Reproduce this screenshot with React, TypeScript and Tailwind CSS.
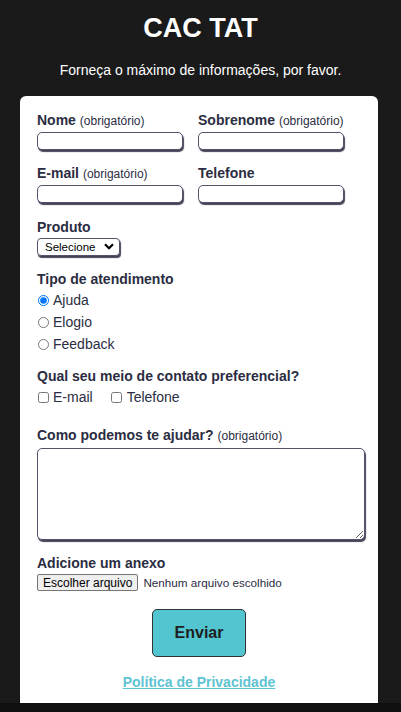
import React from 'react';

const labelCls = 'block h-[16px] text-[14px] leading-[16px] font-bold text-[#2b2d42] whitespace-nowrap';
const reqCls = 'text-[12px] leading-[12px] font-normal';
const inputCls =
    'block h-[18px] rounded-[5px] border border-[#55526b] bg-white shadow-[1px_2px_1px_rgba(35,32,55,0.85)] outline-none';

function Field({ label, required, className }: { label: string; required?: boolean; className?: string }) {
    return (
        <div className={className}>
            <label className={labelCls}>
                {label} {required && <span className={reqCls}>(obrigatório)</span>}
            </label>
            <input type="text" className={`${inputCls} mt-[4px] w-[146px]`} />
        </div>
    );
}

export default function App() {
    return (
        <div
            className="min-h-[712px] bg-[#1a1a1a] flex flex-col"
            style={{ fontFamily: '"Liberation Sans", Arial, sans-serif' }}
        >
            <h1 className="pt-[12px] text-center text-[27px] leading-[32px] font-bold text-white">CAC TAT</h1>
            <p className="mt-[18px] text-center text-[14px] leading-[16px] text-white">
                Forneça o máximo de informações, por favor.
            </p>

            <form className="mt-[18px] ml-[20px] w-[358px] rounded-t-[6px] bg-white pt-[16px] pl-[17px] pr-[13px] pb-[13px]">
                <div className="grid grid-cols-[148px_148px] gap-x-[13px]">
                    <Field label="Nome" required />
                    <Field label="Sobrenome" required />
                </div>
                <div className="mt-[15px] grid grid-cols-[148px_148px] gap-x-[13px]">
                    <Field label="E-mail" required />
                    <Field label="Telefone" />
                </div>

                <div className="mt-[16px]">
                    <label className={labelCls}>Produto</label>
                    <div className="relative mt-[3px] w-[83px]">
                        <select className="block h-[18px] w-[83px] appearance-none rounded-[4px] border border-[#55526b] bg-white pl-[7px] text-[11.5px] leading-[14px] text-black shadow-[1px_2px_1px_rgba(35,32,55,0.85)] outline-none">
                            <option>Selecione</option>
                        </select>
                        <svg
                            className="pointer-events-none absolute right-[6px] top-[5px]"
                            width="10"
                            height="7"
                            viewBox="0 0 10 7"
                        >
                            <path d="M1 1.2 L5 5.2 L9 1.2" fill="none" stroke="#000" strokeWidth="2.2" />
                        </svg>
                    </div>
                </div>

                <div className="mt-[15px]">
                    <span className={labelCls}>Tipo de atendimento</span>
                    <div className="mt-[2px] flex flex-col">
                        {['Ajuda', 'Elogio', 'Feedback'].map((t, i) => (
                            <label key={t} className="flex h-[22px] items-center gap-[4px] text-[14px] text-[#2b2d42]">
                                <input
                                    type="radio"
                                    name="tipo"
                                    defaultChecked={i === 0}
                                    className="m-0 ml-[1px] h-[11px] w-[11px]"
                                />
                                {t}
                            </label>
                        ))}
                    </div>
                </div>

                <div className="mt-[13px]">
                    <span className={labelCls}>Qual seu meio de contato preferencial?</span>
                    <div className="mt-[4px] flex h-[18px] items-center text-[14px] text-[#2b2d42]">
                        <label className="flex items-center gap-[4px]">
                            <input type="checkbox" className="m-0 ml-[1px] h-[11px] w-[11px]" />
                            E-mail
                        </label>
                        <label className="ml-[18px] flex items-center gap-[5px]">
                            <input type="checkbox" className="m-0 h-[11px] w-[11px]" />
                            Telefone
                        </label>
                    </div>
                </div>

                <div className="mt-[21px]">
                    <label className={labelCls}>
                        Como podemos te ajudar? <span className={reqCls}>(obrigatório)</span>
                    </label>
                    <textarea className="mt-[5px] block h-[92px] w-[328px] rounded-[5px] border border-[#55526b] bg-white shadow-[1px_2px_1px_rgba(35,32,55,0.85)] outline-none" />
                </div>

                <div className="mt-[15px]">
                    <span className={labelCls}>Adicione um anexo</span>
                    <div className="mt-[3px] flex h-[17px] items-center text-[12px] text-[#2b2d42]">
                        <button
                            type="button"
                            className="h-[17px] rounded-[2px] border border-[#767676] bg-[#efefef] px-[5px] text-[12px] leading-[14px] text-black"
                        >
                            Escolher arquivo
                        </button>
                        <span className="ml-[5px] text-[11.7px]">Nenhum arquivo escolhido</span>
                    </div>
                </div>

                <div className="mt-[18px] flex justify-center pr-[4px]">
                    <button
                        type="submit"
                        className="h-[48px] w-[94px] rounded-[5px] border border-[#333] bg-[#52c5d0] text-[16px] font-bold text-[#1e1e1e]"
                    >
                        Enviar
                    </button>
                </div>

                <p className="mt-[17px] h-[16px] pr-[4px] text-center text-[14px] leading-[16px]">
                    <a href="#" className="font-bold text-[#5ec3d2] underline">
                        Política de Privacidade
                    </a>
                </p>
            </form>
            <div className="flex-1 bg-[#0f0f0f]" />
        </div>
    );
}
